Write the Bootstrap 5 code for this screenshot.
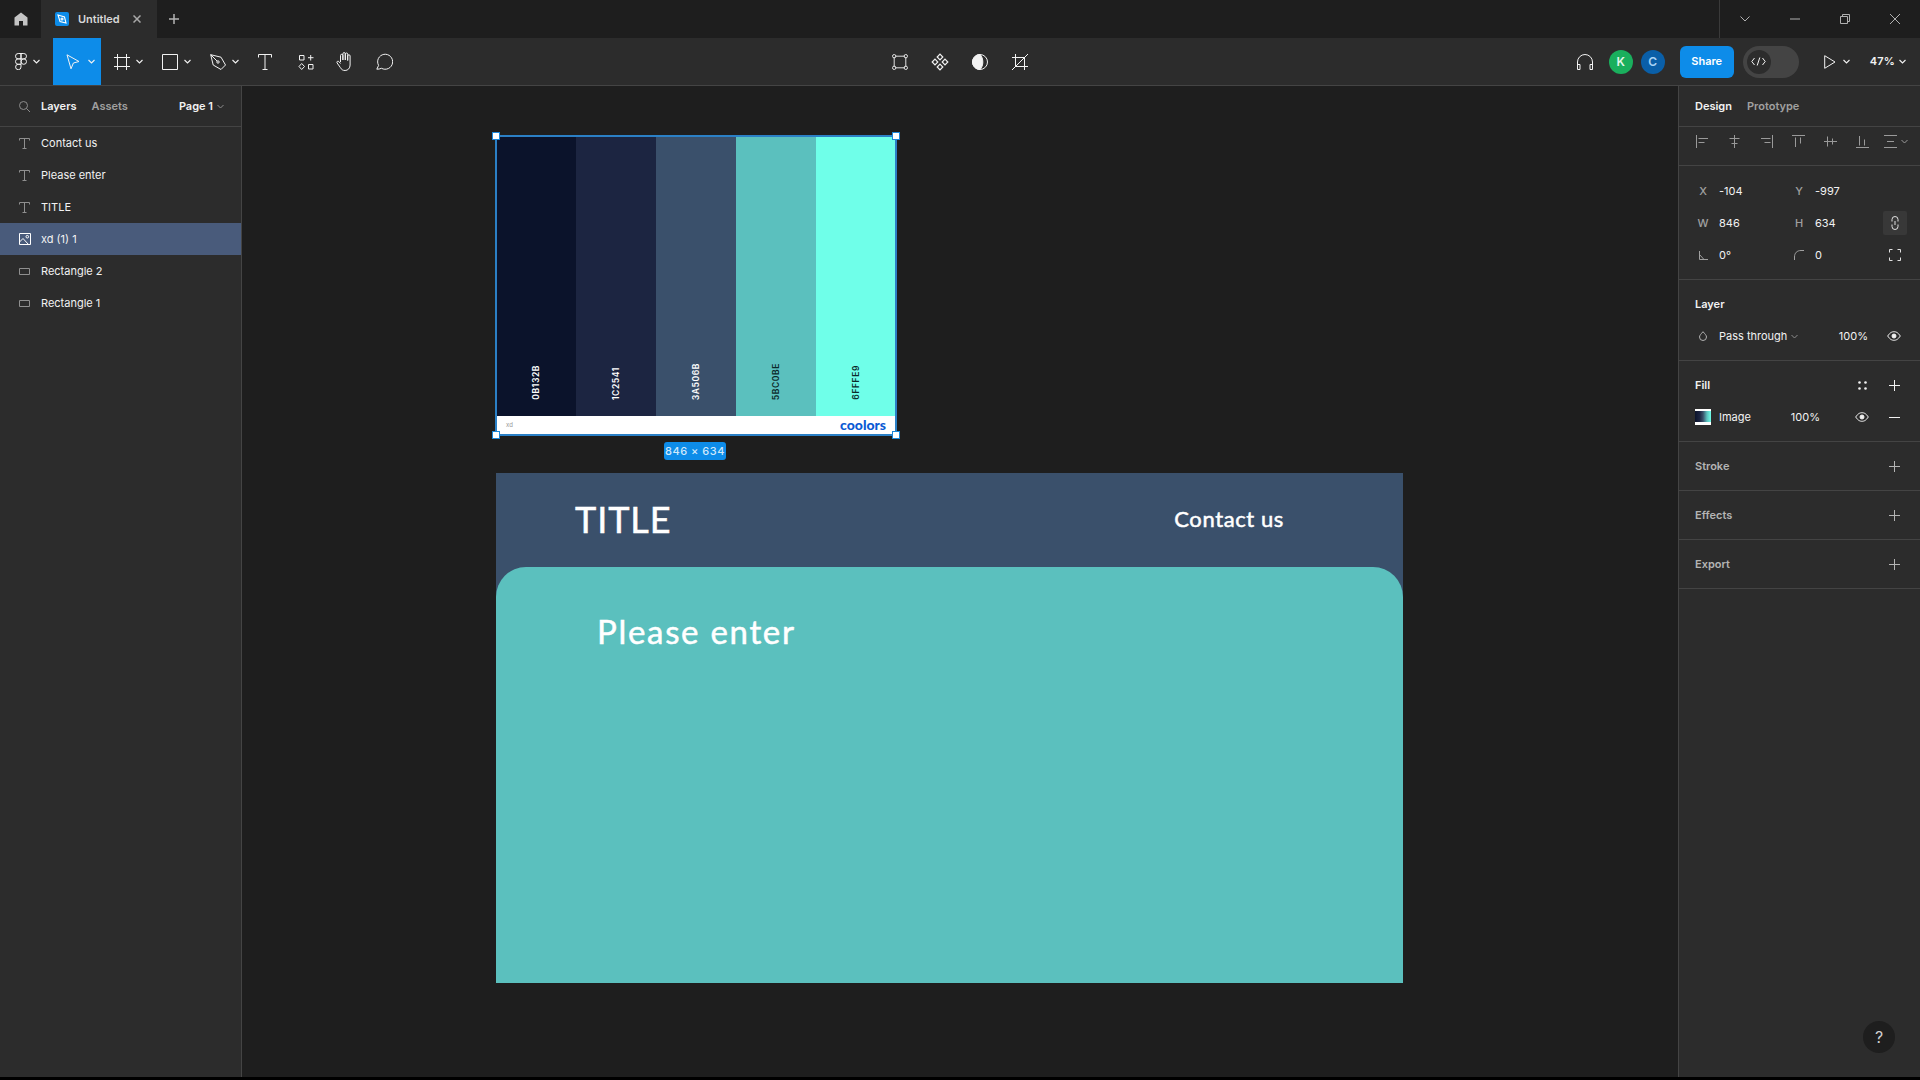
<!DOCTYPE html>
<html lang="en">
<head>
<meta charset="utf-8">
<title>Untitled</title>
<link href="https://cdn.jsdelivr.net/npm/bootstrap@5.3.0/dist/css/bootstrap.min.css" rel="stylesheet">
<style>
html,body{height:100%;overflow:hidden}
body{background:#000;font-family:Inter,"Liberation Sans",sans-serif;font-size:11px;color:#f2f2f2}
svg{display:block;flex:none;fill:none;stroke:currentColor}
.app{height:1077px;width:1920px}
.tabbar{height:38px;background:#1e1e1e}
.homebtn{width:41px;color:#c4c4c4}
.filetab{width:116px;background:#2c2c2c;padding-left:14px;color:#d8d8d8;font-weight:600;font-size:11px}
.fileicon{width:14px;height:14px;background:#0d8ce9;border-radius:2px;margin-right:9px}
.winarea{margin-left:auto;border-left:1px solid #3a3a3a;width:201px}
.wincell{width:50px;color:#b0b0b0}
.toolbar{height:48px;background:#2c2c2c;border-bottom:1px solid #444;display:grid;grid-template-columns:1fr auto 1fr}
.tool{width:48px;height:47px;position:relative;color:#f2f2f2}
.tool>svg:first-child{margin-left:13px}
.tool .chev{position:absolute;left:35px;top:21px}
.tool.active{background:#0d8ce9}
.tool.wide{width:40px}
.tool.first{width:53px}
.tool.first .chev{left:33px}
.tool.plain{justify-content:center}
.tool.plain>svg:first-child{margin-left:0}
.toolfix{margin-right:2px}
.avatar{width:24px;height:24px;border-radius:50%;font-size:12px;font-weight:600}
.av-k{background:#1aaf5d;color:#e4f7ec;margin-left:12px}
.av-c{background:#0a5fa8;color:#a8d2f5;margin-left:8px}
.sharebtn{width:54px;height:32px;margin-left:15px;background:#0d8ce9;border-radius:6px;color:#fff;font-weight:600;font-size:11px}
.devtoggle{width:56px;height:32px;margin-left:9px;background:#444;border-radius:16px;padding-left:4px}
.devknob{width:24px;height:24px;background:#2c2c2c;border-radius:50%}
.zoomval{font-weight:600;letter-spacing:.2px;margin-left:20px;margin-right:1px}
.workspace{flex:1;min-height:0}
.leftpanel{width:242px;background:#2c2c2c;border-right:1px solid #444}
.lefthead{height:41px;border-bottom:1px solid #444;padding-left:19px;padding-right:17px;font-weight:600}
.dimtxt{color:#a0a0a0}
.layerrow{height:32px;padding-left:19px}
.layerrow>svg{margin-right:11px;color:#8f8f8f}
.layerrow.sel{background:#495b7b}
.layerrow.sel>svg{color:#fff}
.canvasarea{flex:1;background:#1e1e1e;position:relative;overflow:hidden}
.rightpanel{width:242px;background:#2c2c2c;border-left:1px solid #444;position:relative}
.pane{border-bottom:1px solid #444;padding-left:16px;padding-right:10px}
.rtabs{height:41px;font-weight:600}
.aligns{height:39px;color:#9a9a9a;padding-bottom:9px}
.aligns>span{width:32px}
.geo{height:114px;padding-top:9px}
.georow{display:grid;grid-template-columns:24px 72px 24px 64px 32px;height:32px;align-items:center}
.lab{width:16px;text-align:center;color:#a0a0a0;font-weight:500}
.icell{color:#e0e0e0}
.linkbox{width:24px;height:24px;background:#383838;border-radius:2px;margin-left:4px}
.secrow{height:32px;margin-top:-9px}
.sectitle{height:49px}
.iconbox{width:32px}
.swatchmini{width:16px;height:16px;background:linear-gradient(90deg,#0b132b,#1c2541 30%,#3a506b 50%,#5bc0be 75%,#6fffe9);border-top:2px solid #fff;border-bottom:3px solid #fff;margin-right:8px}
.collapsed{height:49px;font-weight:600;color:#b4b4b4}
.helpbtn{position:absolute;right:25px;bottom:24px;width:32px;height:32px;border-radius:50%;background:#1e1e1e;color:#d0d0d0;font-size:16px}
/* free canvas: artboards sit at their canvas coordinates */
.palette{position:absolute;left:254px;top:50px;width:400px;height:299px;background:#fff;outline:2px solid #2b80c6;outline-offset:-1px}
.stripes{height:280px}
.stripe{width:80px;height:280px;padding-bottom:16px}
.stripe span{writing-mode:vertical-rl;transform:rotate(180deg);font-weight:600;font-size:8.5px;letter-spacing:.6px}
.palfoot{height:19px;padding:0 10px 2px 10px}
.palname{font-size:6px;color:#999}
.coolors{font-family:Lato,sans-serif;font-weight:900;font-size:14px;color:#0a5ad4;line-height:1}
.hnd{position:absolute;width:8px;height:8px;background:#fff;border:1.5px solid #1c87d9}
.dimtag{position:absolute;left:422px;top:356px;width:62px;height:18px;background:#0d8ce9;color:#cfe8fb;border-radius:3px;font-size:11px;font-weight:500;letter-spacing:.5px}
.artboard{position:absolute;left:254px;top:387px;width:907px;height:510px;background:#3a506b}
.abhead{height:94px;padding:0 119px 3px 79px;color:#fff;font-family:Lato,sans-serif;font-weight:400;-webkit-text-stroke:.5px #fff}
.abtitle{font-size:36px;letter-spacing:.9px}
.abcontact{font-size:22px;letter-spacing:.6px}
.abbody{height:416px;background:#5bc0be;border-radius:30px 30px 0 0;padding:40px 0 0 101px;color:#fff;font-family:Lato,sans-serif;font-weight:400;-webkit-text-stroke:.5px #fff;font-size:33px;letter-spacing:1.7px}
</style>
</head>
<body>
<div class="app d-flex flex-column">
  <div class="tabbar d-flex">
    <div class="homebtn d-flex align-items-center justify-content-center">
      <svg width="14" height="14" viewBox="0 0 14 14" style="fill:currentColor;stroke:none"><path d="M7 .5 13.500 5.500V13.500H9V9H5V13.500H.5V5.500Z"/></svg>
    </div>
    <div class="filetab d-flex align-items-center">
      <span class="fileicon d-flex align-items-center justify-content-center"><svg width="10" height="10" viewBox="0 0 10 10" stroke-width="1.1" style="color:#fff"><path d="M1 1 7.500 3 9 9 3 7.500Z"/><circle cx="5" cy="5" r="1"/></svg></span>
      <span>Untitled</span>
      <svg class="ms-auto me-3" width="8" height="8" viewBox="0 0 8 8" stroke-width="1.5" style="color:#a8a8a8"><path d="M.5.5 7.500 7.500M7.500.5 .5 7.500"/></svg>
    </div>
    <div class="d-flex align-items-center" style="padding-left:12px;color:#b4b4b4">
      <svg width="10" height="10" viewBox="0 0 10 10" stroke-width="1.5"><path d="M5 0V10M0 5H10"/></svg>
    </div>
    <div class="winarea d-flex align-items-center">
      <div class="wincell d-flex justify-content-center"><svg width="10" height="6" viewBox="0 0 10 6"><path d="M.5.5 5 5 9.500.5"/></svg></div>
      <div class="wincell d-flex justify-content-center"><svg width="10" height="2" viewBox="0 0 10 2" stroke-width="1"><path d="M0 1H10"/></svg></div>
      <div class="wincell d-flex justify-content-center"><svg width="10" height="10" viewBox="0 0 10 10"><path d="M.5 2.500H7.500V9.500H.5ZM2.500 2.500V.5H9.500V7.500H7.500"/></svg></div>
      <div class="wincell d-flex justify-content-center"><svg width="10" height="10" viewBox="0 0 10 10"><path d="M0 0 10 10M10 0 0 10"/></svg></div>
    </div>
  </div>

  <div class="toolbar">
    <div class="d-flex">
      <div class="tool first d-flex align-items-center">
        <svg width="12" height="17" viewBox="0 0 12 17" stroke-width="1" style="margin-left:15px"><path d="M6 .5H3.200a2.700 2.700 0 0 0 0 5.400H6ZM6 .5H8.800a2.700 2.700 0 0 1 0 5.400H6ZM6 5.900H3.200a2.700 2.700 0 0 0 0 5.400H6ZM6 11.300H3.200a2.700 2.700 0 1 0 2.800 2.700Z"/><circle cx="8.800" cy="8.600" r="2.700"/></svg>
        <svg class="chev" width="7" height="5" viewBox="0 0 7 5" stroke-width="1.1"><path d="M.5 1 3.500 4 6.500 1"/></svg>
      </div>
      <div class="tool active d-flex align-items-center">
        <svg width="14" height="16" viewBox="0 0 14 16"><path d="M1 .8 13 7.500 7.400 9 5 14.800Z"/></svg>
        <svg class="chev" width="7" height="5" viewBox="0 0 7 5" stroke-width="1.1"><path d="M.5 1 3.500 4 6.500 1"/></svg>
      </div>
      <div class="tool d-flex align-items-center">
        <svg width="16" height="16" viewBox="0 0 16 16"><path d="M3.500 0V16M12.500 0V16M0 3.500H16M0 12.500H16"/></svg>
        <svg class="chev" width="7" height="5" viewBox="0 0 7 5" stroke-width="1.1"><path d="M.5 1 3.500 4 6.500 1"/></svg>
      </div>
      <div class="tool d-flex align-items-center">
        <svg width="16" height="16" viewBox="0 0 16 16"><path d="M.5.5H15.500V15.500H.5Z"/></svg>
        <svg class="chev" width="7" height="5" viewBox="0 0 7 5" stroke-width="1.1"><path d="M.5 1 3.500 4 6.500 1"/></svg>
      </div>
      <div class="tool d-flex align-items-center">
        <svg width="16" height="16" viewBox="0 0 16 16"><path d="M.7.7 11 3.200 15.500 11 11 15.500 3.200 11ZM.7.7 7.200 7.200"/><circle cx="8" cy="8" r="1.200"/></svg>
        <svg class="chev" width="7" height="5" viewBox="0 0 7 5" stroke-width="1.1"><path d="M.5 1 3.500 4 6.500 1"/></svg>
      </div>
      <div class="tool wide plain d-flex align-items-center">
        <svg width="14" height="16" viewBox="0 0 14 16"><path d="M.5 3.500V.5H13.500V3.500M7 .5V15.500M4.500 15.500H9.500"/></svg>
      </div>
      <div class="tool wide plain d-flex align-items-center">
        <svg width="16" height="16" viewBox="0 0 16 16" style="margin-left:2px"><path d="M1.500 1.500H6V6H1.500ZM10.500 10.500H15V15H10.500ZM12.700 1V6.500M10 3.700H15.500M3.700 9.500 6.500 12.500 3.700 15.500 1 12.500Z"/></svg>
      </div>
      <div class="tool wide plain d-flex align-items-center">
        <svg width="18" height="19" viewBox="0 0 18 19"><path d="M4.500 10V3.500a1.200 1.200 0 0 1 2.400 0V8M6.900 8V1.800a1.200 1.200 0 0 1 2.400 0V8M9.300 8V2.200a1.200 1.200 0 0 1 2.400 0V8.500M11.700 8.500V4a1.200 1.200 0 0 1 2.400 0V13c0 3.200-2.200 5.500-5 5.500-2.500 0-3.600-1-4.800-3L1 10.800c-.6-1.300 1-2.200 1.900-1.200L4.500 11.500"/></svg>
      </div>
      <div class="tool wide plain d-flex align-items-center toolfix">
        <svg width="17" height="17" viewBox="0 0 17 17" style="margin-right:2px"><path d="M.8 16.200 2.600 12.400A7.500 7.500 0 1 1 5.500 15.300C4 16 2.300 16.200.8 16.200Z"/></svg>
      </div>
    </div>
    <div class="d-flex">
      <div class="tool wide plain d-flex align-items-center">
        <svg width="16" height="16" viewBox="0 0 16 16" style="color:#e0e0e0"><path d="M3 2.200H13M3 13.800H13M2.200 3V13M13.800 3V13"/><circle cx="2.200" cy="2.200" r="1.700"/><circle cx="13.800" cy="2.200" r="1.700"/><circle cx="2.200" cy="13.800" r="1.700"/><circle cx="13.800" cy="13.800" r="1.700"/></svg>
      </div>
      <div class="tool wide plain d-flex align-items-center">
        <svg width="18" height="18" viewBox="0 0 18 18" stroke-width="1.200"><path d="M9 1.200 11.800 4 9 6.800 6.200 4ZM9 11.200 11.800 14 9 16.800 6.200 14ZM4 6.200 6.800 9 4 11.800 1.200 9ZM14 6.200 16.800 9 14 11.800 11.200 9Z"/></svg>
      </div>
      <div class="tool wide plain d-flex align-items-center">
        <svg width="16" height="16" viewBox="0 0 16 16"><circle cx="8" cy="8" r="7.500"/><path d="M8 .5C3 .5.5 5 .5 8S3 15.500 8 15.500C10 13.500 10.800 10.800 10.800 8S10 2.500 8 .5Z" style="fill:currentColor"/></svg>
      </div>
      <div class="tool wide plain d-flex align-items-center">
        <svg width="16" height="16" viewBox="0 0 16 16"><path d="M3.500 0V12.500H16M0 3.500H12.500V16M0 16 16 0" style="stroke-width:1"/></svg>
      </div>
    </div>
    <div class="d-flex align-items-center justify-content-end" style="padding-right:14px">
      <svg width="18" height="18" viewBox="0 0 18 18" style="margin-right:3px"><path d="M1.500 12V9a7.500 7.500 0 0 1 15 0V12M1.500 11.500H4V16.500H1.500ZM14 11.500H16.500V16.500H14Z"/></svg>
      <div class="avatar av-k d-flex align-items-center justify-content-center">K</div>
      <div class="avatar av-c d-flex align-items-center justify-content-center">C</div>
      <div class="sharebtn d-flex align-items-center justify-content-center">Share</div>
      <div class="devtoggle d-flex align-items-center"><div class="devknob d-flex align-items-center justify-content-center"><svg width="15" height="9" viewBox="0 0 15 9"><path d="M3.500 1 .8 4.500 3.500 8M11.500 1 14.200 4.500 11.500 8M8.800.5 6.200 8.500"/></svg></div></div>
      <svg width="12" height="14" viewBox="0 0 12 14" style="margin-left:25px"><path d="M.7.7 11 7 .7 13.300Z"/></svg>
      <svg width="7" height="5" viewBox="0 0 7 5" stroke-width="1.1" style="margin-left:7px"><path d="M.5 1 3.500 4 6.500 1"/></svg>
      <span class="zoomval">47%</span>
      <svg width="7" height="5" viewBox="0 0 7 5" stroke-width="1.1" style="margin-left:3px"><path d="M.5 1 3.500 4 6.500 1"/></svg>
    </div>
  </div>

  <div class="workspace d-flex">
    <aside class="leftpanel">
      <div class="lefthead d-flex align-items-center">
        <svg width="11" height="11" viewBox="0 0 11 11" style="color:#8c8c8c"><circle cx="4.500" cy="4.500" r="4"/><path d="M7.500 7.500 11 11"/></svg>
        <span style="margin-left:11px">Layers</span>
        <span class="dimtxt" style="margin-left:15px">Assets</span>
        <span class="ms-auto">Page 1</span>
        <svg class="ms-1" width="7" height="5" viewBox="0 0 7 5" style="color:#8c8c8c"><path d="M.5 1 3.500 4 6.500 1"/></svg>
      </div>
      <div class="layerrow d-flex align-items-center"><svg width="11" height="11" viewBox="0 0 11 11"><path d="M.5 2.500V.5H10.500V2.500M5.500.5V10.500M3.500 10.500H7.500"/></svg><span>Contact us</span></div>
      <div class="layerrow d-flex align-items-center"><svg width="11" height="11" viewBox="0 0 11 11"><path d="M.5 2.500V.5H10.500V2.500M5.500.5V10.500M3.500 10.500H7.500"/></svg><span>Please enter</span></div>
      <div class="layerrow d-flex align-items-center"><svg width="11" height="11" viewBox="0 0 11 11"><path d="M.5 2.500V.5H10.500V2.500M5.500.5V10.500M3.500 10.500H7.500"/></svg><span>TITLE</span></div>
      <div class="layerrow sel d-flex align-items-center"><svg width="12" height="12" viewBox="0 0 12 12" style="margin-right:10px"><path d="M.5.5H11.500V11.500H.5ZM.5 9 4 5.500 9.500 11.500"/><circle cx="8.300" cy="3.700" r="1.300"/></svg><span>xd (1) 1</span></div>
      <div class="layerrow d-flex align-items-center"><svg width="11" height="7" viewBox="0 0 11 7"><path d="M.5.5H10.500V6.500H.5Z"/></svg><span>Rectangle 2</span></div>
      <div class="layerrow d-flex align-items-center"><svg width="11" height="7" viewBox="0 0 11 7"><path d="M.5.5H10.500V6.500H.5Z"/></svg><span>Rectangle 1</span></div>
    </aside>

    <main class="canvasarea">
      <div class="palette">
        <div class="stripes d-flex">
          <div class="stripe d-flex align-items-end justify-content-center" style="background:#0b132b;color:#fff"><span>0B132B</span></div>
          <div class="stripe d-flex align-items-end justify-content-center" style="background:#1c2541;color:#fff"><span>1C2541</span></div>
          <div class="stripe d-flex align-items-end justify-content-center" style="background:#3a506b;color:#fff"><span>3A506B</span></div>
          <div class="stripe d-flex align-items-end justify-content-center" style="background:#5bc0be;color:#0b2a2a"><span>5BC0BE</span></div>
          <div class="stripe d-flex align-items-end justify-content-center" style="background:#6fffe9;color:#0b2a2a"><span>6FFFE9</span></div>
        </div>
        <div class="palfoot d-flex align-items-center justify-content-between"><span class="palname">xd</span><span class="coolors">coolors</span></div>
      </div>
      <div class="hnd" style="left:250px;top:46px"></div>
      <div class="hnd" style="left:650px;top:46px"></div>
      <div class="hnd" style="left:250px;top:345px"></div>
      <div class="hnd" style="left:650px;top:345px"></div>
      <div class="dimtag d-flex align-items-center justify-content-center">846 × 634</div>

      <div class="artboard">
        <div class="abhead d-flex align-items-center justify-content-between"><span class="abtitle">TITLE</span><span class="abcontact">Contact us</span></div>
        <div class="abbody">Please enter</div>
      </div>
    </main>

    <aside class="rightpanel">
      <div class="pane rtabs d-flex align-items-center"><span>Design</span><span class="dimtxt" style="margin-left:15px">Prototype</span></div>
      <div class="pane aligns d-flex align-items-center" style="padding-left:8px">
        <span class="d-flex justify-content-center"><svg width="13" height="13" viewBox="0 0 13 13"><path d="M.5 0V13M2.500 3.500H12M2.500 7.500H8.500"/></svg></span>
        <span class="d-flex justify-content-center"><svg width="13" height="13" viewBox="0 0 13 13"><path d="M6.500 0V13M1.500 3.500H11.500M3.500 8.500H9.500"/></svg></span>
        <span class="d-flex justify-content-center"><svg width="13" height="13" viewBox="0 0 13 13"><path d="M12.500 0V13M1 3.500H10.500M4.500 7.500H10.500"/></svg></span>
        <span class="d-flex justify-content-center"><svg width="13" height="13" viewBox="0 0 13 13"><path d="M0 .5H13M3.500 2.500V12M8.500 2.500V8.500"/></svg></span>
        <span class="d-flex justify-content-center"><svg width="13" height="13" viewBox="0 0 13 13"><path d="M0 6.500H13M3.500 1.500V11.500M8.500 3.500V9.500"/></svg></span>
        <span class="d-flex justify-content-center"><svg width="13" height="13" viewBox="0 0 13 13"><path d="M0 12.500H13M3.500 1V10.500M8.500 4.500V10.500"/></svg></span>
        <span class="d-flex align-items-center" style="padding-left:6px"><svg width="13" height="13" viewBox="0 0 13 13"><path d="M0 .5H13M0 12.500H13M3 6.500H10"/></svg><svg class="ms-1" width="7" height="5" viewBox="0 0 7 5"><path d="M.5 1 3.500 4 6.500 1"/></svg></span>
      </div>
      <div class="pane geo">
        <div class="georow"><span class="lab">X</span><span>-104</span><span class="lab">Y</span><span>-997</span><span></span></div>
        <div class="georow"><span class="lab">W</span><span>846</span><span class="lab">H</span><span>634</span><span class="linkbox d-flex align-items-center justify-content-center"><svg width="8" height="14" viewBox="0 0 8 14" class="icell"><path d="M1 5.500V3.500a3 3 0 0 1 6 0V5.500M1 8.500V10.500a3 3 0 0 0 6 0V8.500M4 5V9"/></svg></span></div>
        <div class="georow"><span class="lab d-flex justify-content-center"><svg width="9" height="9" viewBox="0 0 9 9"><path d="M.5 0V8.500H9M.5 3.500 5 8.500"/></svg></span><span>0°</span><span class="lab d-flex justify-content-center"><svg width="10" height="10" viewBox="0 0 10 10"><path d="M.5 10V7C.5 3 3 .5 7 .5H10"/></svg></span><span>0</span><span class="d-flex justify-content-center" style="margin-left:4px;width:24px"><svg class="icell" width="12" height="12" viewBox="0 0 12 12"><path d="M.5 3.500V.5H3.500M8.500.5H11.500V3.500M11.500 8.500V11.500H8.500M3.500 11.500H.5V8.500"/></svg></span></div>
      </div>
      <div class="pane" style="height:81px">
        <div class="sectitle d-flex align-items-center fw-semibold">Layer</div>
        <div class="d-flex align-items-center secrow">
          <svg width="8" height="10" viewBox="0 0 8 10" style="margin:0 12px 0 4px;color:#b0b0b0"><path d="M4 .7C6 3 7.500 4.500 7.500 6a3.500 3.500 0 0 1-7 0C.5 4.500 2 3 4 .7Z"/></svg>
          <span>Pass through</span>
          <svg class="ms-1" width="7" height="5" viewBox="0 0 7 5" style="color:#8c8c8c"><path d="M.5 1 3.500 4 6.500 1"/></svg>
          <span class="ms-auto" style="margin-right:10px">100%</span>
          <span class="iconbox d-flex justify-content-center"><svg width="14" height="10" viewBox="0 0 14 10"><path d="M.7 5C3 1.500 5 .7 7 .7S11 1.500 13.300 5C11 8.500 9 9.300 7 9.300S3 8.500.7 5Z"/><circle cx="7" cy="5" r="2" style="fill:currentColor"/></svg></span>
        </div>
      </div>
      <div class="pane" style="height:81px">
        <div class="sectitle d-flex align-items-center"><span class="fw-semibold">Fill</span>
          <span class="iconbox ms-auto d-flex justify-content-center"><svg width="9" height="9" viewBox="0 0 9 9" style="fill:currentColor;stroke:none"><circle cx="1.500" cy="1.500" r="1.300"/><circle cx="7.500" cy="1.500" r="1.300"/><circle cx="1.500" cy="7.500" r="1.300"/><circle cx="7.500" cy="7.500" r="1.300"/></svg></span>
          <span class="iconbox d-flex justify-content-center"><svg width="11" height="11" viewBox="0 0 11 11"><path d="M5.500 0V11M0 5.500H11"/></svg></span>
        </div>
        <div class="d-flex align-items-center secrow">
          <span class="swatchmini"></span><span>Image</span>
          <span class="ms-auto" style="margin-right:26px">100%</span>
          <span class="iconbox d-flex justify-content-center"><svg width="14" height="10" viewBox="0 0 14 10"><path d="M.7 5C3 1.500 5 .7 7 .7S11 1.500 13.300 5C11 8.500 9 9.300 7 9.300S3 8.500.7 5Z"/><circle cx="7" cy="5" r="2" style="fill:currentColor"/></svg></span>
          <span class="iconbox d-flex justify-content-center"><svg width="11" height="11" viewBox="0 0 11 11"><path d="M0 5.500H11"/></svg></span>
        </div>
      </div>
      <div class="pane collapsed d-flex align-items-center justify-content-between"><span>Stroke</span><span class="iconbox d-flex justify-content-center"><svg width="11" height="11" viewBox="0 0 11 11"><path d="M5.500 0V11M0 5.500H11"/></svg></span></div>
      <div class="pane collapsed d-flex align-items-center justify-content-between"><span>Effects</span><span class="iconbox d-flex justify-content-center"><svg width="11" height="11" viewBox="0 0 11 11"><path d="M5.500 0V11M0 5.500H11"/></svg></span></div>
      <div class="pane collapsed d-flex align-items-center justify-content-between"><span>Export</span><span class="iconbox d-flex justify-content-center"><svg width="11" height="11" viewBox="0 0 11 11"><path d="M5.500 0V11M0 5.500H11"/></svg></span></div>
      <div class="helpbtn d-flex align-items-center justify-content-center">?</div>
    </aside>
  </div>
</div>
</body>
</html>
